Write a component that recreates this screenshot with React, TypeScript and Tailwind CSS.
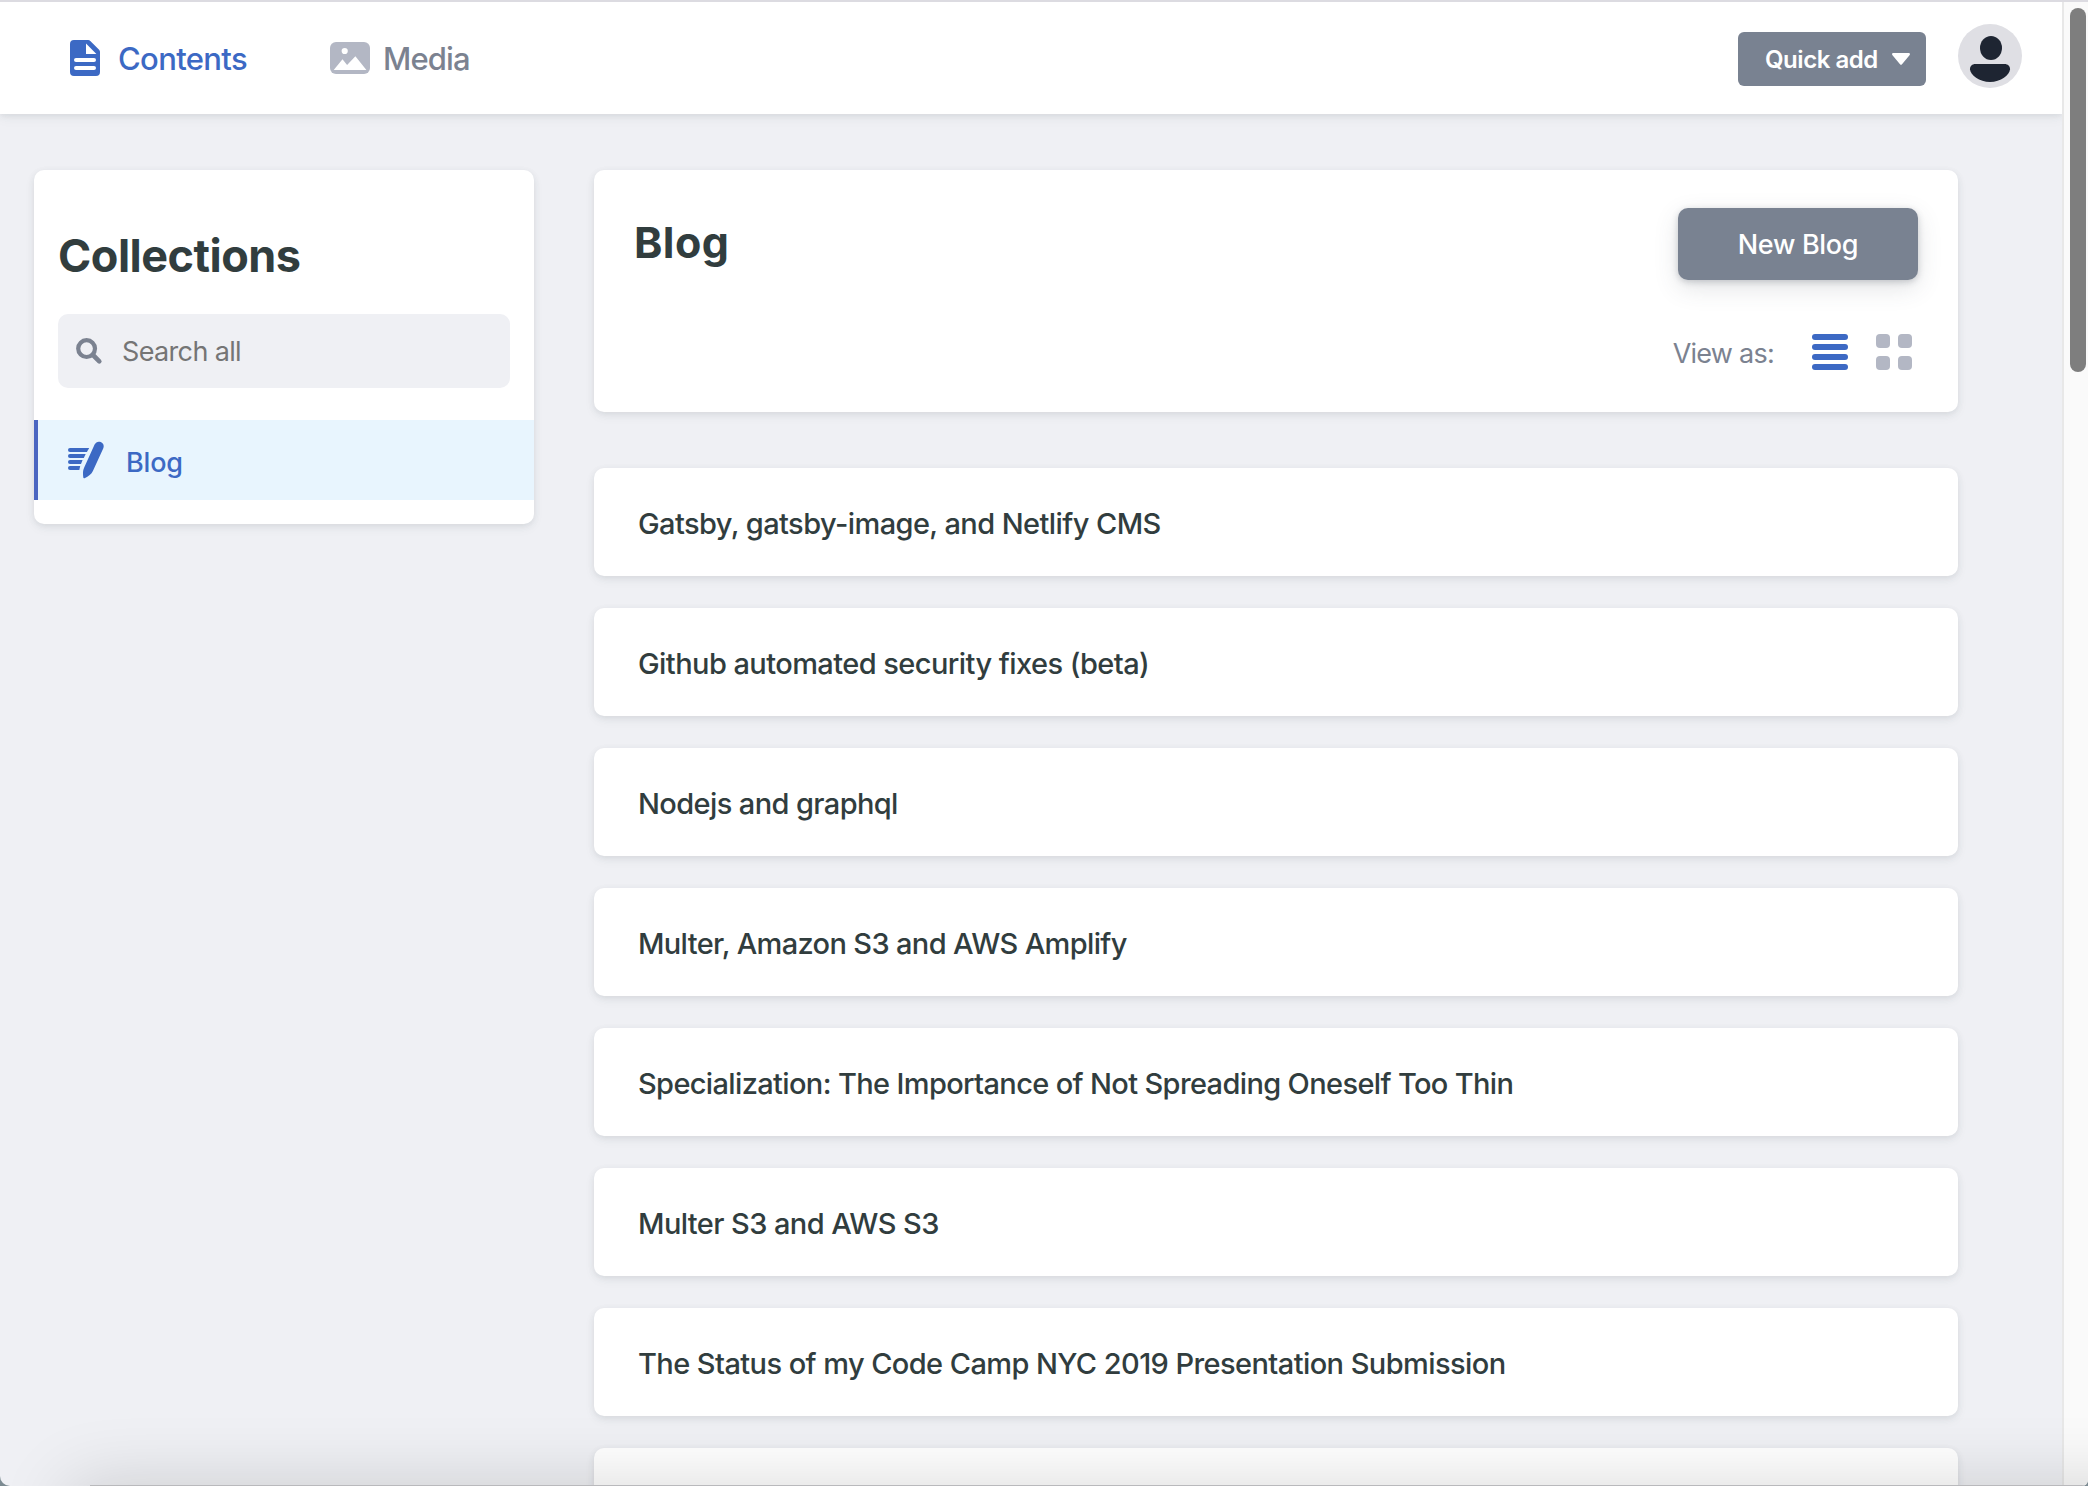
const entries = [
  { title: 'Gatsby, gatsby-image, and Netlify CMS', tracking: 'tracking-[-0.58px]' },
  { title: 'Github automated security fixes (beta)', tracking: 'tracking-[-0.57px]' },
  { title: 'Nodejs and graphql', tracking: 'tracking-[-0.61px]' },
  { title: 'Multer, Amazon S3 and AWS Amplify', tracking: 'tracking-[-0.65px]' },
  { title: 'Specialization: The Importance of Not Spreading Oneself Too Thin', tracking: 'tracking-[-0.64px]' },
  { title: 'Multer S3 and AWS S3', tracking: 'tracking-[-0.59px]' },
  { title: 'The Status of my Code Camp NYC 2019 Presentation Submission', tracking: 'tracking-[-0.58px]' },
  { title: '', tracking: 'tracking-normal' },
];

const card = 'rounded-[10px] bg-white shadow-[0_4px_12px_0_rgba(68,74,87,0.05),0_2px_6px_0_rgba(68,74,87,0.1)]';

function PageIcon() {
  return (
    <svg width="30" height="36" viewBox="0 0 30 36" className="shrink-0">
      <path
        fill="currentColor"
        fillRule="evenodd"
        d="M4 0H18.2a3 3 0 0 1 2.1.9L29.1 9.7a3 3 0 0 1 .9 2.1V32a4 4 0 0 1-4 4H4a4 4 0 0 1-4-4V4a4 4 0 0 1 4-4ZM16 3.6V14H26.4ZM6 18a2 2 0 0 0 0 4H24a2 2 0 0 0 0-4ZM6 26a2 2 0 0 0 0 4H24a2 2 0 0 0 0-4Z"
      />
    </svg>
  );
}

function MediaIcon() {
  return (
    <svg width="40" height="32" viewBox="0 0 40 32" className="shrink-0 text-[#b3b7c4]">
      <rect width="40" height="32" rx="6" fill="currentColor" />
      <circle cx="14.7" cy="9" r="3.1" fill="#fff" />
      <path d="M3.7 28L12.5 17.2L17.1 23L25.4 14.2L36.4 28Z" fill="#fff" />
    </svg>
  );
}

function WriteIcon() {
  return (
    <svg width="36" height="38" viewBox="0 0 36 38" className="shrink-0" fill="currentColor">
      <path d="M2 7H21.2L18.9 11H2A2 2 0 0 1 2 7Z" />
      <path d="M2 13H17.7L15.8 17H2A2 2 0 0 1 2 13Z" />
      <path d="M2 19H14.6L13 23H2A2 2 0 0 1 2 19Z" />
      <path d="M2 25H12.2L11.3 29H2A2 2 0 0 1 2 25Z" />
      <path d="M26.6 3.6C27.9 .9 30.4 0 32.7 1.1C35.4 2.2 36.4 4.7 35.2 7.4L24.9 30C23.5 33 20.5 35.4 16.6 37.2C15.8 37.5 15.4 37.2 15.3 36.5C14.8 32.6 14.8 29.6 16.2 26.6Z" />
    </svg>
  );
}

function SearchIcon() {
  return (
    <svg width="27" height="27" viewBox="0 0 27 27" className="shrink-0" fill="none" stroke="currentColor">
      <circle cx="10.6" cy="10.6" r="8.4" strokeWidth="4.2" />
      <path d="M17 17L23.3 23.3" strokeWidth="4.6" strokeLinecap="round" />
    </svg>
  );
}

function Avatar() {
  return (
    <svg width="64" height="64" viewBox="0 0 64 64" className="mb-1 shrink-0">
      <circle cx="32" cy="32" r="32" fill="#dfdfe4" />
      <ellipse cx="33" cy="24" rx="11" ry="12" fill="#1e2532" />
      <path d="M17.5 40H46.5C50 40 52 42.2 52 45.2C52 50.5 42.5 58 32 58C21.5 58 12 50.5 12 45.2C12 42.2 14 40 17.5 40Z" fill="#1e2532" />
    </svg>
  );
}

function Header() {
  return (
    <header className="flex h-28 items-center bg-white pr-10 pl-[70px] shadow-[0_4px_12px_0_rgba(68,74,87,0.05),0_2px_6px_0_rgba(68,74,87,0.1)]">
      <a className="flex items-center text-[#3c69c4]">
        <PageIcon />
        <span className="ml-[18px] w-[212px] pt-0.5 text-[31px] leading-10 font-medium tracking-[-0.65px]">Contents</span>
      </a>
      <a className="flex items-center text-[#7b8290]">
        <MediaIcon />
        <span className="ml-[13px] pt-0.5 text-[31px] leading-10 font-medium tracking-[-0.85px]">Media</span>
      </a>
      <button className="mt-0.5 ml-auto flex h-[54px] w-[188px] items-center rounded-[6px] bg-[#798291] pl-[27px] text-[24px] font-semibold tracking-[-0.46px] text-white">
        <span className="pt-0.5">Quick add</span>
        <svg width="18" height="12" viewBox="0 0 18 12" className="ml-3.5" fill="currentColor">
          <path d="M1.6 0H16.4C17.9 0 18.4 1.3 17.5 2.3L10 11.3C9.4 12 8.6 12 8 11.3L.5 2.3C-.4 1.3 .1 0 1.6 0Z" />
        </svg>
      </button>
      <div className="ml-8">
        <Avatar />
      </div>
    </header>
  );
}

function Sidebar() {
  return (
    <aside className={`${card} h-[354px] w-[500px] shrink-0 pt-[60px]`}>
      <h2 className="px-6 text-[45px] leading-[52px] font-bold tracking-[-0.5px]">Collections</h2>
      <div className="mx-6 mt-8 flex h-[74px] items-center rounded-[10px] bg-[#eff0f4] pl-[18px] text-[#7b8290]">
        <SearchIcon />
        <span className="ml-[19px] pt-0.5 text-[27px] tracking-[-0.65px] text-[#757575]">Search all</span>
      </div>
      <a className="mt-8 flex h-20 items-center border-l-4 border-[#4b66c1] bg-[#e8f5fe] pl-[30px] text-[#3c69c4]">
        <WriteIcon />
        <span className="ml-[22px] pt-1.5 text-[27px] leading-9 font-medium tracking-[-0.2px]">Blog</span>
      </a>
    </aside>
  );
}

function CollectionTop() {
  return (
    <section className={`${card} h-[242px] px-10 pt-[38px]`}>
      <div className="flex items-start justify-between">
        <h1 className="pt-2 text-[43px] leading-[52px] font-bold tracking-[0.4px]">Blog</h1>
        <button className="h-[72px] w-60 rounded-[10px] bg-[#798291] pt-0.5 text-[27px] font-medium tracking-[-0.3px] text-white shadow-[0_8px_24px_0_rgba(68,74,87,0.15),0_2px_6px_0_rgba(68,74,87,0.25)]">
          New Blog
        </button>
      </div>
      <div className="mt-[54px] flex h-9 items-center justify-end pr-1.5">
        <span className="pt-1 text-[27px] leading-9 tracking-[-0.75px] text-[#7b8290]">View as:</span>
        <div className="ml-[38px] flex w-9 flex-col gap-1">
          <span className="h-1.5 rounded-full bg-[#3c69c4]" />
          <span className="h-1.5 rounded-full bg-[#3c69c4]" />
          <span className="h-1.5 rounded-full bg-[#3c69c4]" />
          <span className="h-1.5 rounded-full bg-[#3c69c4]" />
        </div>
        <div className="ml-7 grid w-9 grid-cols-2 gap-2">
          <span className="size-3.5 rounded bg-[#b3b7c4]" />
          <span className="size-3.5 rounded bg-[#b3b7c4]" />
          <span className="size-3.5 rounded bg-[#b3b7c4]" />
          <span className="size-3.5 rounded bg-[#b3b7c4]" />
        </div>
      </div>
    </section>
  );
}

export default function App() {
  return (
    <div className="h-[1486px] w-[2088px] overflow-hidden bg-[#7c8b92] font-[Inter,sans-serif]">
      <div className="relative flex h-full overflow-hidden rounded-br-[6px] rounded-bl-[10px] border-t-2 border-[#dcdbe1] bg-[#eff0f4] text-[#313d3e]">
        <div className="h-full w-[2062px] overflow-hidden">
          <Header />
          <div className="mt-14 flex gap-[60px] pl-[34px]">
            <Sidebar />
            <main className="w-[1364px]">
              <CollectionTop />
              <ul className="mt-14 flex flex-col gap-8">
                {entries.map((entry, i) => (
                  <li key={i} className={`${card} flex h-[108px] items-center pt-[3px] pl-11`}>
                    <span className={`text-[29px] leading-10 font-medium whitespace-nowrap ${entry.tracking}`}>{entry.title}</span>
                  </li>
                ))}
              </ul>
            </main>
          </div>
        </div>
        <div className="w-[26px] border-l-2 border-[#e8e8e8] bg-[#fafafa] pt-1.5 pl-1.5">
          <div className="h-[364px] w-4 rounded-full bg-[#7e7e7e]" />
        </div>
        <div className="pointer-events-none absolute top-full -right-24 left-[70px] h-24 shadow-[0_0_72px_0_rgba(0,0,0,0.16)]" />
        <div className="pointer-events-none absolute right-0 bottom-0 left-[90px] h-px bg-[#b9b9bc]" />
      </div>
    </div>
  );
}
